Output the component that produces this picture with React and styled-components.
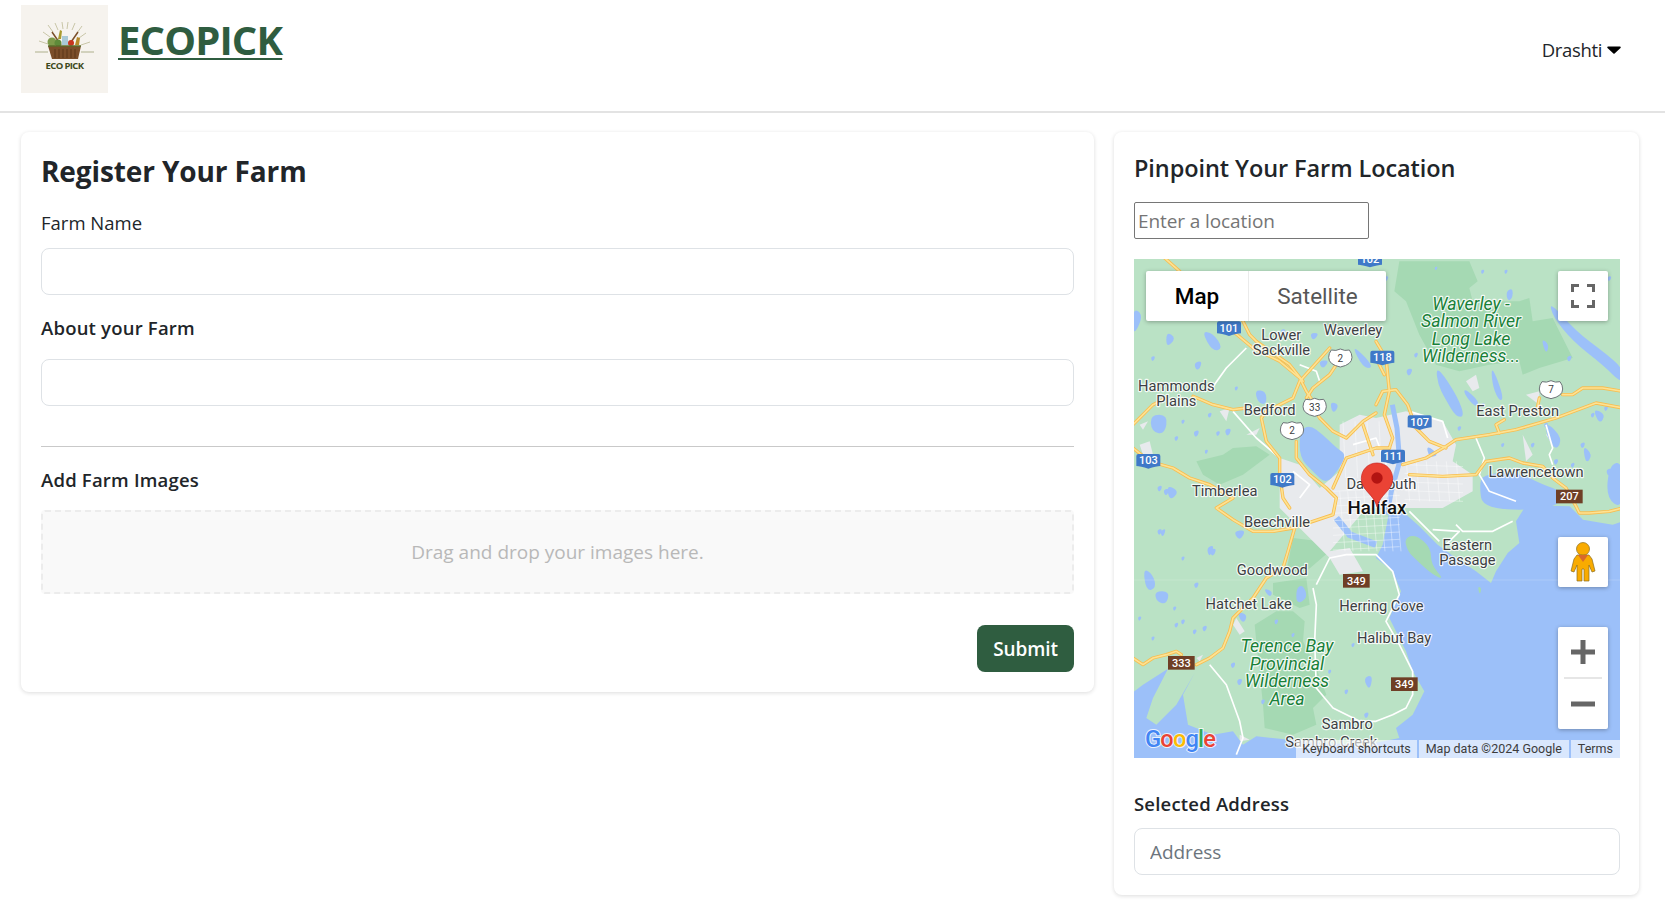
import React from 'react';
import styled, {createGlobalStyle} from 'styled-components';

const GlobalStyle = createGlobalStyle`
  * { box-sizing: border-box; }
  body {
    margin: 0;
    background: #fff;
    color: #212529;
    font-family: 'Open Sans', 'Noto Sans', sans-serif;
  }
`;

const Header = styled.header`
  height: 113px;
  display: flex;
  align-items: flex-start;
  justify-content: space-between;
  padding: 5px 44px 0 21px;
  border-bottom: 2px solid #e3e3e3;
`;
const Brand = styled.a`
  display: flex;
  align-items: flex-start;
  gap: 10px;
  color: #2f5d40;
  text-decoration: none;
`;
const BrandName = styled.span`
  font-size: 40px;
  font-weight: 700;
  line-height: 56px;
  letter-spacing: -0.85px;
  margin-top: 7px;
  text-decoration: underline;
  text-decoration-thickness: 2px;
  text-underline-offset: 3px;
`;
const UserMenu = styled.div`
  display: flex;
  align-items: center;
  gap: 5px;
  margin-top: 33px;
  font-size: 18.5px;
  letter-spacing: -0.35px;
  line-height: 24px;
  color: #212529;
`;
const Main = styled.main`
  display: flex;
  align-items: flex-start;
  gap: 20px;
  padding: 19px 26px 12px 21px;
`;
const Card = styled.section`
  width: ${p => p.$width}px;
  flex: none;
  padding: ${p => p.$padding};
  background: #fff;
  border-radius: 8px;
  box-shadow: 0 1px 4px rgba(0, 0, 0, 0.14);
`;
const Title = styled.h2`
  margin: 0 0 ${p => p.$after}px;
  font-size: ${p => p.$size}px;
  font-weight: ${p => p.$weight};
  line-height: 36px;
  letter-spacing: ${p => p.$spacing}px;
  color: #212529;
`;
const Label = styled.label`
  display: block;
  font-size: 18.5px;
  line-height: 24px;
  font-weight: ${p => (p.$strong ? 600 : 400)};
  letter-spacing: ${p => (p.$strong ? '0.2px' : '0')};
  margin-bottom: ${p => p.$after}px;
  color: #212529;
`;
const Input = styled.input`
  display: block;
  width: 100%;
  height: 47px;
  padding: 0 15px;
  border: 1px solid #dee2e6;
  border-radius: 8px;
  background: #fff;
  font-family: inherit;
  font-size: 19px;
  letter-spacing: -0.1px;
  margin-bottom: ${p => p.$after}px;
  &::placeholder {
    color: #6c757d;
    opacity: 1;
  }
`;
const Divider = styled.hr`
  margin: 0 0 21px;
  border: none;
  border-top: 1px solid #c9c9c9;
`;
const DropZone = styled.div`
  height: 84px;
  display: flex;
  align-items: center;
  justify-content: center;
  border: 2px dashed #ececec;
  border-radius: 4px;
  background: #f9f9f9;
  font-size: 19px;
  color: #b8b8b8;
`;
const Actions = styled.div`
  display: flex;
  justify-content: flex-end;
  margin-top: 31px;
`;
const SubmitButton = styled.button`
  width: 97px;
  height: 47px;
  border: none;
  border-radius: 8px;
  background: #2f5d40;
  color: #fff;
  font-family: inherit;
  font-size: 19px;
  font-weight: 600;
  letter-spacing: -0.1px;
`;
const LocationInput = styled.input`
  display: block;
  width: 235px;
  height: 37px;
  padding: 0 3px;
  border: 1px solid #767676;
  border-radius: 2px;
  font-family: inherit;
  font-size: 19px;
  letter-spacing: -0.1px;
  margin-bottom: 20px;
  &::placeholder {
    color: #757575;
    opacity: 1;
  }
`;
const MapFrame = styled.div`
  position: relative;
  height: 499px;
  margin-bottom: 34px;
  overflow: hidden;
  font-family: Roboto, sans-serif;
  background: #9cc0f9;
`;
const MapCanvas = styled.svg`
  display: block;
  width: 100%;
  height: 100%;
`;
const MapTypeControl = styled.div`
  position: absolute;
  top: 12px;
  left: 12px;
  display: flex;
  height: 50px;
  border-radius: 2px;
  overflow: hidden;
  background: #fff;
  box-shadow: 0 1px 4px rgba(0, 0, 0, 0.3);
`;
const MapTypeButton = styled.div`
  width: ${p => p.$width}px;
  display: flex;
  align-items: center;
  justify-content: center;
  font-size: 22.5px;
  font-weight: ${p => (p.$active ? 500 : 400)};
  color: ${p => (p.$active ? '#000' : '#565656')};
  border-left: ${p => (p.$active ? 'none' : '1px solid #ebebeb')};
`;
const MapButton = styled.div`
  position: absolute;
  top: ${p => p.$top}px;
  right: 12px;
  width: 50px;
  height: ${p => p.$height}px;
  display: flex;
  flex-direction: column;
  align-items: center;
  justify-content: center;
  background: #fff;
  border-radius: 2px;
  box-shadow: 0 1px 4px rgba(0, 0, 0, 0.3);
`;
const ZoomStep = styled.div`
  flex: 1;
  align-self: stretch;
  display: flex;
  align-items: center;
  justify-content: center;
`;
const ZoomRule = styled.div`
  width: 38px;
  height: 2px;
  background: #e6e6e6;
`;
const Attribution = styled.div`
  position: absolute;
  right: 0;
  bottom: 0;
  display: flex;
  gap: 2px;
  height: 18px;
  font-size: 12.5px;
  line-height: 18px;
  color: #3c3c3c;
`;
const AttributionItem = styled.span`
  padding: 0 ${p => p.$pad}px;
  background: rgba(255, 255, 255, 0.62);
  white-space: nowrap;
`;

// Map coordinates are kept at 3x so they read straight off a zoomed crop.
const blob = pts => {
  const p = [];
  for (let i = 0; i < pts.length; i += 2) p.push([pts[i], pts[i + 1]]);
  let d = '';
  p.forEach((a, i) => {
    const b = p[(i + 1) % p.length];
    const mx = (a[0] + b[0]) / 2;
    const my = (a[1] + b[1]) / 2;
    d += i === 0 ? `M${mx} ${my}` : `Q${a[0]} ${a[1]} ${mx} ${my}`;
  });
  const f = p[0];
  return `${d}Q${f[0]} ${f[1]} ${(f[0] + p[1][0]) / 2} ${(f[1] + p[1][1]) / 2}Z`;
};
const line = pts => {
  let d = `M${pts[0]} ${pts[1]}`;
  for (let i = 2; i < pts.length; i += 2) d += `L${pts[i]} ${pts[i + 1]}`;
  return d;
};
const shift = (pts, dx, dy) => pts.map((v, i) => v + (i % 2 ? dy : dx));

const sea = [
  769, 760, 814, 765, 859, 805, 914, 860, 969, 900, 1029, 940, 1074, 975, 1089, 940, 1124, 885, 1159, 855, 1149, 790,
  1179, 742, 1310, 745, 1350, 785, 1439, 800, 1470, 790, 1470, 1510, -10, 1510, -10, 1310, 30, 1280, 105, 1232, 60,
  1320, 40, 1380, 70, 1400, 130, 1340, 185, 1245, 150, 1310, 165, 1400, 240, 1430, 300, 1420, 330, 1460, 370, 1435,
  470, 1445, 560, 1455, 700, 1460, 799, 1440, 789, 1410, 839, 1370, 874, 1300, 839, 1240, 819, 1180, 769, 1080, 804,
  1000, 779, 940, 729, 900, 749, 860,
];
const parks = [
  [799, 10, 1009, 10, 1034, 70, 1009, 90, 1019, 130, 1159, 130, 1189, 120, 1199, 190, 1259, 180, 1319, 300, 1219, 330,
    1169, 350, 1159, 310, 1069, 320, 979, 340, 909, 320, 859, 230, 819, 130, 784, 100],
  [190, 610, 270, 590, 300, 570, 370, 565, 410, 590, 370, 620, 330, 650, 260, 680, 210, 650],
  [480, 840, 560, 850, 590, 880, 520, 940, 460, 940],
  [420, 975, 520, 960, 530, 1040, 500, 1050, 420, 1010],
  [365, 1100, 430, 1060, 480, 1060, 515, 1090, 510, 1150, 550, 1230, 580, 1310, 540, 1350, 550, 1400, 480, 1430, 395,
    1410, 390, 1340, 370, 1150],
];
const lakes = [
  [500, 520, 530, 500, 570, 530, 610, 570, 640, 590, 620, 630, 580, 680, 540, 640, 500, 600],
  [205, 220, 240, 225, 270, 270, 240, 282],
  [100, 220, 130, 240, 100, 270],
  [52, 470, 105, 470, 95, 530, 55, 520],
  [0, 150, 30, 170, 10, 220, 0, 220],
  [365, 395, 400, 400, 400, 440, 375, 435],
  [100, 680, 140, 700, 110, 730],
  [590, 430, 620, 440, 600, 470],
  [555, 310, 590, 305, 570, 335],
  [530, 225, 560, 225, 540, 250],
  [655, 260, 700, 300, 720, 330, 690, 330],
  [909, 330, 931, 350, 975, 420, 995, 475, 970, 478, 935, 420, 915, 380],
  [1074, 330, 1088, 350, 1112, 420, 1100, 430, 1080, 390],
  [1249, 130, 1329, 220, 1409, 280, 1470, 330, 1470, 380, 1409, 320, 1319, 250, 1259, 175],
  [994, 390, 1039, 430, 1029, 450, 994, 410],
  [1119, 100, 1139, 90, 1139, 120, 1124, 130],
  [1224, 240, 1249, 260, 1239, 290],
  [1050, 650, 1149, 640, 1229, 680, 1289, 700, 1269, 755, 1049, 755, 1039, 680],
  [1239, 490, 1289, 540, 1269, 580, 1239, 530],
  [1349, 560, 1379, 590, 1359, 620],
  [1429, 620, 1470, 610, 1470, 755, 1419, 720],
  [1379, 450, 1419, 470, 1399, 500],
  [879, 560, 919, 590, 889, 600],
  [30, 930, 60, 950, 70, 990, 40, 1000],
  [65, 1000, 110, 1000, 100, 1040, 70, 1030],
  [300, 820, 340, 815, 320, 850],
  [310, 1060, 345, 1070, 330, 1100],
  [510, 980, 525, 1020, 490, 1040, 490, 990],
  [690, 1260, 720, 1250, 710, 1300],
  [390, 990, 420, 1000, 410, 1020],
  [220, 870, 245, 860, 230, 900],
  [80, 820, 100, 810, 90, 840],
];
// small ponds: x, y, size
const ponds = [
  [195, 320, 12], [100, 700, 9], [80, 690, 8], [450, 220, 8], [190, 525, 9], [285, 520, 10], [255, 525, 7], [40, 600, 9],
  [130, 540, 7], [230, 470, 7], [310, 390, 6], [150, 490, 6], [120, 110, 8], [60, 300, 7], [20, 380, 6], [220, 580, 6],
  [80, 820, 8], [240, 880, 10], [190, 980, 8], [215, 1110, 8], [150, 1090, 7], [185, 1120, 7], [125, 1050, 6],
  [130, 1100, 7], [300, 1220, 8], [320, 1270, 9], [390, 1330, 7], [430, 1090, 7], [480, 1130, 6], [640, 1300, 7],
  [700, 1370, 8], [660, 1160, 6], [590, 1240, 6], [150, 900, 6], [20, 1080, 6], [60, 1140, 6], [240, 1020, 6],
  [829, 340, 10], [979, 510, 7], [1309, 300, 8], [1349, 560, 8], [1379, 470, 7], [1419, 450, 7], [1429, 640, 10],
  [1239, 500, 7], [1269, 610, 8], [1319, 620, 7], [1409, 130, 9], [1429, 60, 7], [1119, 40, 6], [1049, 40, 6], [909, 30, 5],
  [760, 60, 7], [1199, 560, 7], [1109, 560, 6], [1050, 440, 6], [849, 290, 7],
];
const urban = [
  [620, 500, 680, 470, 729, 480, 819, 460, 929, 490, 969, 560, 959, 610, 1019, 650, 1019, 700, 929, 750, 700, 750, 590,
    880, 650, 870, 690, 940, 620, 950, 590, 900, 440, 750, 440, 600, 500, 620, 560, 690, 620, 640],
  [999, 370, 1029, 350, 1039, 390, 1019, 400],
  [1179, 410, 1219, 400, 1219, 440],
  [1169, 530, 1199, 590, 1179, 610],
  [1239, 530, 1259, 520, 1259, 560],
  [260, 460, 290, 450, 280, 490],
  [340, 530, 380, 510, 370, 530],
  [20, 500, 45, 490, 30, 515],
  [20, 560, 50, 550, 60, 590, 30, 590],
  [310, 1080, 335, 1120, 320, 1130, 300, 1100],
  [190, 1200, 210, 1190, 200, 1210],
  [320, 1430, 350, 1445, 320, 1450],
];
const highways = [
  [95, 0, 140, 40, 170, 70],
  [300, 220, 360, 270, 440, 310, 500, 360, 520, 400, 540, 430],
  [590, 270, 500, 370, 480, 420, 400, 460, 385, 480, 400, 550, 440, 600, 440, 650, 450, 720, 470, 750],
  [330, 190, 350, 230, 370, 250, 470, 320, 510, 370],
  [610, 320, 590, 350, 540, 390, 520, 420],
  [530, 430, 560, 480, 600, 520, 640, 540, 690, 490, 729, 465],
  [0, 500, 60, 440, 100, 420],
  [180, 415, 240, 440, 300, 455, 340, 450],
  [0, 570, 50, 610, 120, 630, 170, 660, 230, 680, 300, 720, 250, 750, 300, 785, 360, 820, 420, 820, 480, 810, 540, 790,
    600, 770, 610, 720, 580, 690, 530, 650, 490, 600, 490, 550],
  [600, 690, 640, 600, 729, 570, 770, 570],
  [690, 500, 720, 590],
  [729, 250, 759, 300, 769, 400, 754, 470, 779, 540, 769, 570],
  [729, 300, 754, 350],
  [729, 440, 749, 400, 789, 395, 824, 440, 849, 510, 889, 550, 939, 570],
  [809, 620, 879, 600, 939, 565, 969, 545, 1069, 530, 1149, 515, 1269, 480, 1389, 435, 1470, 450],
  [1099, 525, 1089, 500, 1114, 485],
  [1219, 420, 1209, 470],
  [1289, 410, 1319, 410, 1349, 390, 1409, 390, 1470, 400],
  [829, 650, 929, 655, 1029, 650, 1059, 610, 1129, 600, 1169, 615, 1229, 625, 1259, 660, 1299, 690, 1329, 745, 1339,
    765, 1369, 765, 1429, 760, 1470, 750],
  [485, 810, 465, 880, 450, 930, 400, 960, 360, 1020, 300, 1080, 290, 1120, 270, 1170, 230, 1200, 190, 1220],
  [0, 1200, 30, 1220, 60, 1200, 100, 1190, 130, 1180, 145, 1190],
];
const whiteRoads = [
  [340, 270, 280, 330, 230, 400],
  [300, 460, 370, 540, 440, 600],
  [500, 320, 550, 340, 560, 370],
  [230, 1220, 280, 1280, 320, 1390, 330, 1440, 310, 1490],
  [540, 990, 550, 1040, 545, 1150, 550, 1290, 600, 1350, 680, 1390, 729, 1390, 779, 1370, 819, 1350, 839, 1310, 839, 1240,
    799, 1160, 759, 1090, 799, 1010, 779, 940, 729, 890, 640, 890, 590, 900, 550, 980],
  [829, 760, 919, 850],
  [899, 815, 979, 820, 939, 860],
  [969, 800, 989, 820, 1079, 820, 1139, 790],
  [829, 460, 929, 490, 944, 540],
  [1029, 540, 1054, 600, 1039, 650, 1069, 700, 1149, 730],
  [1239, 500, 1259, 570, 1249, 590, 1259, 620],
  [480, 640, 530, 680, 500, 720],
  [660, 560, 729, 540, 760, 620],
];
// street grid of the two cities, drawn thinner than the white roads
const streets = [];
for (let x = 620; x < 800; x += 24) streets.push([x, 700, x + 16, 880]);
for (let y = 700; y < 880; y += 22) streets.push([600, y, 800, y - 10]);
for (let x = 820; x < 980; x += 30) streets.push([x, 610, x + 10, 730]);
for (let y = 620; y < 730; y += 26) streets.push([815, y, 990, y + 6]);
for (let x = 630; x < 760; x += 36) streets.push([x, 490, x + 8, 660]);

const blueShields = [
  ['101', 252, 190], ['103', 10, 588], ['102', 412, 645], ['118', 712, 278], ['107', 824, 472], ['111', 744, 575],
  ['102', 675, -16],
];
const brownShields = [['207', 1269, 695], ['349', 630, 948], ['333', 105, 1194], ['349', 774, 1258]];
const whiteShields = [['2', 587, 272], ['33', 510, 420], ['2', 442, 490], ['7', 1219, 367]];
const places = [
  ['Lower', 445, 245], ['Sackville', 445, 290], ['Waverley', 660, 232], ['Hammonds', 130, 400], ['Plains', 130, 445],
  ['Bedford', 410, 472], ['Timberlea', 275, 715], ['Beechville', 432, 808], ['Goodwood', 418, 950],
  ['Hatchet Lake', 347, 1052], ['Herring Cove', 745, 1060], ['Halibut Bay', 783, 1155], ['Sambro', 643, 1412],
  ['Sambro Creek', 595, 1468], ['Eastern', 1003, 877], ['Passage', 1003, 922], ['East Preston', 1154, 475],
  ['Lawrencetown', 1209, 657], ['Dartmouth', 745, 692],
];
const parkNames = [
  ['Waverley -', 1014, 155], ['Salmon River', 1014, 208], ['Long Lake', 1014, 262], ['Wilderness...', 1014, 313],
  ['Terence Bay', 462, 1182], ['Provincial', 462, 1235], ['Wilderness', 462, 1288], ['Area', 462, 1340],
];

const PlaceName = styled.text`
  font-family: Roboto, sans-serif;
  font-size: ${p => p.$size || 44}px;
  font-weight: ${p => p.$weight || 400};
  font-style: ${p => (p.$park ? 'italic' : 'normal')};
  fill: ${p => (p.$park ? '#188038' : p.$weight ? '#111' : '#3c4043')};
  stroke: #fff;
  stroke-opacity: 0.85;
  stroke-width: 7px;
  stroke-linejoin: round;
  paint-order: stroke;
  text-anchor: middle;
`;
const ShieldText = styled.text`
  font-family: Roboto, sans-serif;
  font-size: ${p => p.$size}px;
  font-weight: ${p => p.$weight};
  fill: ${p => p.$fill};
  text-anchor: middle;
`;
const LogoText = styled.text`
  font-family: Roboto, sans-serif;
  font-size: 71px;
  font-weight: 500;
  letter-spacing: -2.5px;
  stroke: #fff;
  stroke-opacity: 0.8;
  stroke-width: 6px;
  paint-order: stroke;
`;

const MapArt = () => (
  <MapCanvas viewBox="0 0 1458 1497" preserveAspectRatio="none">
    <rect width="1458" height="1497" fill="#bae2c5" />
    <g transform="translate(-3 -3)">
      {parks.map((p, i) => <path key={i} d={line(p) + 'Z'} fill="#a5d9b3" />)}
      {urban.map((p, i) => <path key={i} d={line(p) + 'Z'} fill="#e8eaed" />)}
      {lakes.map((p, i) => <path key={i} d={blob(p)} fill="#9cc0f9" />)}
      {ponds.map(([x, y, s], i) => (
        <path key={i} d={blob([x - s, y - s / 2, x + s, y - s, x + s / 2, y + s, x - s / 2, y + s * 1.4])} fill="#9cc0f9" />
      ))}
      <path d={line(sea) + 'Z'} fill="#9cc0f9" />
      <path d={line([610, 780, 650, 830, 729, 860])} fill="none" stroke="#9cc0f9" strokeWidth="20" />
      <path d={line([762, 770, 775, 700, 800, 610, 792, 510, 778, 440])} fill="none" stroke="#9cc0f9" strokeWidth="15" strokeLinejoin="round" />
      <path d={blob(shift([85, 90, 120, 80, 165, 120, 165, 170, 205, 215, 170, 200, 125, 160, 95, 130], 729, 750))} fill="#a5d9b3" />
      <path d={blob([1034, 985, 1046, 990, 1040, 1012])} fill="#a5d9b3" />
      <path d="M0 966H1470" stroke="#fff" strokeOpacity="0.25" strokeWidth="2" />
      {streets.map((p, i) => <path key={i} d={line(p)} fill="none" stroke="#fff" strokeOpacity="0.6" strokeWidth="2" />)}
      {whiteRoads.map((p, i) => <path key={i} d={line(p)} fill="none" stroke="#fff" strokeWidth="5" strokeLinejoin="round" />)}
      {highways.map((p, i) => <path key={i} d={line(p)} fill="none" stroke="#f8bd4f" strokeWidth="10" strokeLinejoin="round" strokeLinecap="round" />)}
      {highways.map((p, i) => <path key={i} d={line(p)} fill="none" stroke="#fde293" strokeWidth="5" strokeLinejoin="round" strokeLinecap="round" />)}
      {blueShields.map(([n, x, y], i) => (
        <g key={i}>
          <path d={`M${x} ${y + 6}q0-6 6-6h60q6 0 6 6v30q-12 0-36 8q-24-8-36-8z`} fill="#3f79c8" />
          <ShieldText x={x + 36} y={y + 31} $size={33} $weight={500} $fill="#fff">{n}</ShieldText>
        </g>
      ))}
      {brownShields.map(([n, x, y], i) => (
        <g key={i}>
          <rect x={x} y={y} width="80" height="41" fill="#6f3f26" />
          <ShieldText x={x + 40} y={y + 32} $size={33} $weight={500} $fill="#fff">{n}</ShieldText>
        </g>
      ))}
      {whiteShields.map(([n, x, y], i) => (
        <g key={i}>
          <path d={`M${x + 8} ${y + 4}q14 4 27-3q13 7 27 3q8 10 8 22q0 22-35 29q-35-7-35-29q0-12 8-22z`} fill="#fff" stroke="#70757a" strokeWidth="3" />
          <ShieldText x={x + 35} y={y + 39} $size={30} $weight={400} $fill="#3c4043">{n}</ShieldText>
        </g>
      ))}
      {places.map(([n, x, y]) => <PlaceName key={n} x={x} y={y}>{n}</PlaceName>)}
      {parkNames.map(([n, x, y]) => <PlaceName key={n + y} x={x} y={y} $park $size={53}>{n}</PlaceName>)}
      <PlaceName x={732} y={767} $size={56} $weight={500}>Halifax</PlaceName>
      <path d="M732 615c-27 0-47 20-47 47c0 36 36 44 47 84c11-40 47-48 47-84c0-27-20-47-47-47z" fill="#ea4335" stroke="#c5221f" strokeWidth="2" />
      <circle cx="732" cy="660" r="17" fill="#b31412" />
      <LogoText x="36" y="1468">
        <tspan fill="#4285f4">G</tspan>
        <tspan fill="#ea4335">o</tspan>
        <tspan fill="#fbbc05">o</tspan>
        <tspan fill="#4285f4">g</tspan>
        <tspan fill="#34a853">l</tspan>
        <tspan fill="#ea4335">e</tspan>
      </LogoText>
    </g>
  </MapCanvas>
);

const FarmLogo = () => (
  <svg width="87" height="88" viewBox="0 0 87 88">
    <rect width="87" height="88" fill="#f6f3ee" />
    <g stroke="#c9c6a8" strokeWidth="1">
      <path d="M14 47H27M60 47H73" stroke="#aeb08c" />
      <path d="M27 20L32 27M34 18L37 25M41 17L42 24M47 17L46 24M54 18L51 25M61 21L56 28M22 27L29 32M65 28L58 33M18 36L27 39M69 37L60 40" />
    </g>
    <path d="M31 27L40 40M57 27L48 40" stroke="#7a4f2a" strokeWidth="1.5" />
    <circle cx="31" cy="37" r="4.5" fill="#7d9a4a" />
    <circle cx="37" cy="38" r="3.5" fill="#5e8a3a" />
    <rect x="41" y="31" width="6" height="9" fill="#a9c9d6" />
    <circle cx="50" cy="38" r="3" fill="#c8351f" />
    <path d="M54 40l2-8 3 1-1 7z" fill="#b88a2a" />
    <path d="M37 34l2-9 2 1-1 8z" fill="#a89a2e" />
    <path d="M27 41H60L57 54H31Z" fill="#7b4e2a" />
    <path d="M34 44V53M38 44V53M42 44V53M46 44V53M50 44V53M54 44V53" stroke="#5c3719" strokeWidth="1" />
    <path d="M27 41H60" stroke="#5a6b2a" strokeWidth="1.5" />
    <text x="43.5" y="63.5" textAnchor="middle" fontFamily="'Open Sans', sans-serif" fontSize="9.5" fontWeight="700" letterSpacing="-0.6" fill="#3e4a1c">ECO PICK</text>
  </svg>
);

const Caret = () => (
  <svg width="14" height="8" viewBox="0 0 14 8">
    <path d="M1 0.5H13a.8.8 0 0 1 .5 1.4L7.6 7.5a.9.9 0 0 1-1.2 0L.5 1.9A.8.8 0 0 1 1 .5z" fill="#000" />
  </svg>
);

const Pegman = () => (
  <svg width="26" height="40" viewBox="0 0 26 40">
    <circle cx="13" cy="7" r="6.5" fill="#f9ab00" stroke="#8a6d1f" strokeWidth="0.7" />
    <path d="M7 13h12l3 4 3 12-3 1-3-7v16h-5V27h-2V39H7V23l-3 7-3-1 3-12z" fill="#f9ab00" stroke="#8a6d1f" strokeWidth="0.7" />
    <path d="M8 13h10l-5 7z" fill="#d8692b" />
  </svg>
);

export default function App() {
  return (
    <>
      <GlobalStyle />
      <Header>
        <Brand href="#">
          <FarmLogo />
          <BrandName>ECOPICK</BrandName>
        </Brand>
        <UserMenu>
          Drashti
          <Caret />
        </UserMenu>
      </Header>
      <Main>
        <Card $width={1073} $padding="21px 20px 20px">
          <Title $size={28} $weight={700} $spacing={-0.12} $after={22}>Register Your Farm</Title>
          <Label $after={13}>Farm Name</Label>
          <Input $after={21} />
          <Label $strong $after={19}>About your Farm</Label>
          <Input $after={40} />
          <Divider />
          <Label $strong $after={18}>Add Farm Images</Label>
          <DropZone>Drag and drop your images here.</DropZone>
          <Actions>
            <SubmitButton>Submit</SubmitButton>
          </Actions>
        </Card>
        <Card $width={525} $padding="18px 19px 20px 20px">
          <Title $size={23.5} $weight={600} $spacing={-0.08} $after={16}>Pinpoint Your Farm Location</Title>
          <LocationInput placeholder="Enter a location" />
          <MapFrame>
            <MapArt />
            <MapTypeControl>
              <MapTypeButton $width={102} $active>Map</MapTypeButton>
              <MapTypeButton $width={138}>Satellite</MapTypeButton>
            </MapTypeControl>
            <MapButton $top={12} $height={50}>
              <svg width="24" height="24" viewBox="0 0 24 24">
                <path d="M1.5 8V1.5H8M16 1.5H22.5V8M22.5 16V22.5H16M8 22.5H1.5V16" fill="none" stroke="#666" strokeWidth="3" />
              </svg>
            </MapButton>
            <MapButton $top={278} $height={50}>
              <Pegman />
            </MapButton>
            <MapButton $top={368} $height={102}>
              <ZoomStep>
                <svg width="24" height="24" viewBox="0 0 24 24"><path d="M0 12H24M12 0V24" stroke="#666" strokeWidth="5" /></svg>
              </ZoomStep>
              <ZoomRule />
              <ZoomStep>
                <svg width="24" height="6" viewBox="0 0 24 6"><path d="M0 3H24" stroke="#666" strokeWidth="5" /></svg>
              </ZoomStep>
            </MapButton>
            <Attribution>
              <AttributionItem $pad={6}>Keyboard shortcuts</AttributionItem>
              <AttributionItem $pad={7}>Map data ©2024 Google</AttributionItem>
              <AttributionItem $pad={7}>Terms</AttributionItem>
            </Attribution>
          </MapFrame>
          <Label $strong $after={12}>Selected Address</Label>
          <Input placeholder="Address" $after={0} />
        </Card>
      </Main>
    </>
  );
}
